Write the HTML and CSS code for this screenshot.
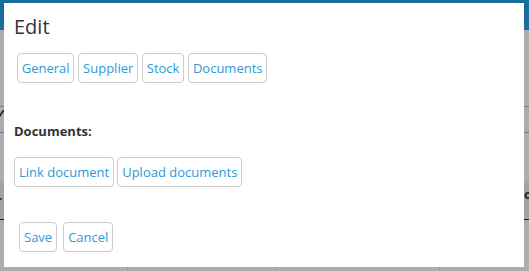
FILE: index.html
```html
<!DOCTYPE html>
<html lang="en">
<head>
    <meta charset="UTF-8">
    <meta name="viewport" content="width=device-width, initial-scale=1.0">
    <title>Edit</title>
    <link rel="stylesheet" href="styles.css">
</head>
<body>
    <div class="page">
        <div class="topbar"></div>
        <div class="grid">
            <div class="row row-filter"><span class="cell-edge">✓</span></div>
            <div class="row row-gap"></div>
            <div class="row row-head">
                <span class="cell-edge">r</span>
                <span class="cell-edge right">o</span>
            </div>
            <div class="row row-body">
                <span class="col"></span>
                <span class="col"></span>
                <span class="col"></span>
                <span class="col"></span>
            </div>
        </div>
    </div>

    <div class="modal">
        <h1>Edit</h1>
        <div class="tabs">
            <button class="btn">General</button>
            <button class="btn">Supplier</button>
            <button class="btn">Stock</button>
            <button class="btn">Documents</button>
        </div>

        <div class="section-label">Documents:</div>
        <div class="doc-actions">
            <button class="btn">Link document</button>
            <button class="btn">Upload documents</button>
        </div>

        <div class="footer">
            <button class="btn">Save</button>
            <button class="btn">Cancel</button>
        </div>
    </div>
</body>
</html>
```

FILE: styles.css
```css
:root {
    --topbar: #1a6e9b;
    --backdrop: #adadad;
    --backdrop-dark: #a3a3a3;
    --line: #7d7d7d;
    --text-color: #333333;
    --link-color: #2d9ad8;
    --border-color: #cccccc;
}

* {
    margin: 0;
    padding: 0;
    box-sizing: border-box;
}

body {
    font-family: "Open Sans", "Noto Sans", Arial, sans-serif;
    background: var(--backdrop);
    color: var(--text-color);
    width: 529px;
    height: 271px;
    overflow: hidden;
    position: relative;
}

.topbar {
    height: 30px;
    background: var(--topbar);
}

.grid {
    display: flex;
    flex-direction: column;
}

.row {
    position: relative;
    font-size: 13px;
    font-weight: 700;
    color: #222;
}

.row-filter {
    margin-top: 76px;
    height: 27px;
    border-top: 1px solid var(--line);
    border-bottom: 1px solid var(--line);
}

.row-gap {
    height: 48px;
}

.row-head {
    height: 39px;
    background: var(--backdrop-dark);
    border-bottom: 1px solid #222;
}

.cell-edge {
    position: absolute;
    left: -4px;
    top: -3px;
}

.row-head .cell-edge {
    top: 10px;
}

.row-head .cell-edge.right {
    left: auto;
    right: -3px;
    top: 4px;
}

.row-body {
    height: 60px;
    display: flex;
}

.col {
    border-right: 1px solid #9a9a9a;
    height: 100%;
}

.col:nth-child(1) { width: 128px; }
.col:nth-child(2) { width: 148px; }
.col:nth-child(3) { width: 164px; }
.col:nth-child(4) { flex: 1; border-right: none; }

.modal {
    position: absolute;
    left: 4px;
    top: 3px;
    width: 520px;
    height: 264px;
    background: #fff;
    padding: 11px 10px 0;
}

h1 {
    font-size: 20px;
    font-weight: 400;
    line-height: 26px;
    color: var(--text-color);
    margin-bottom: 13px;
}

.btn {
    font-family: inherit;
    font-size: 13px;
    line-height: 16px;
    color: var(--link-color);
    background: #fff;
    border: 1px solid var(--border-color);
    border-radius: 4px;
    padding: 6px 4px;
    height: 30px;
    cursor: pointer;
}

.tabs {
    display: flex;
    gap: 4px;
    margin-left: 3px;
}

.tabs .btn {
    padding: 6px 3.75px;
}

.section-label {
    font-size: 13px;
    font-weight: 700;
    margin-top: 39px;
    line-height: 18px;
}

.doc-actions {
    display: flex;
    gap: 3px;
    margin-top: 17px;
}

.footer {
    display: flex;
    gap: 6px;
    margin-top: 35px;
    margin-left: 5px;
}
```
